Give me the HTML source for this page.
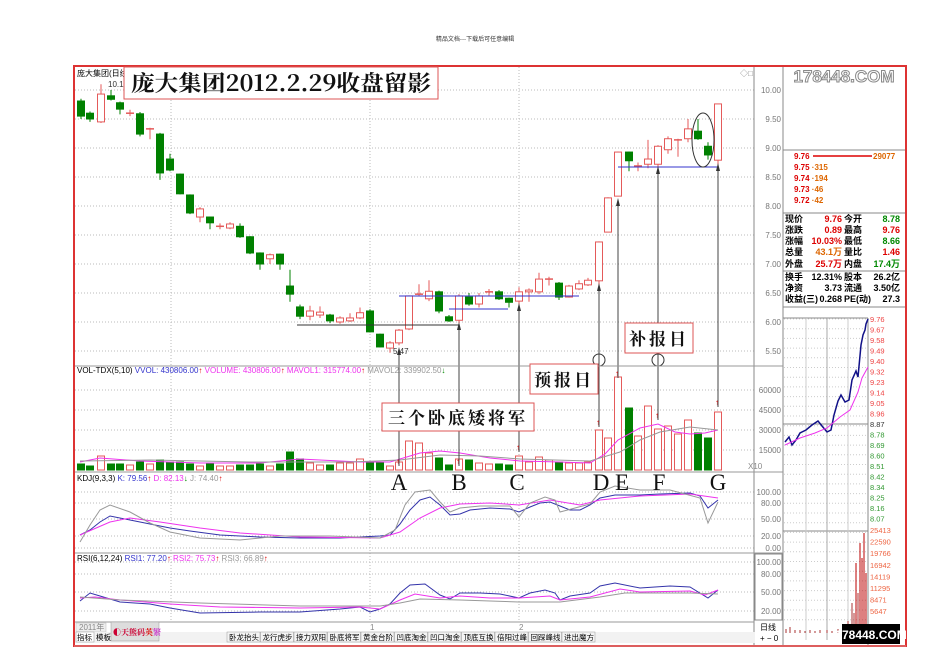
<!DOCTYPE html>
<html><head><meta charset="utf-8">
<style>
body{margin:0;background:#fff;width:950px;height:672px;overflow:hidden;font-family:"Liberation Sans","Noto Sans CJK SC",sans-serif;}
svg{position:absolute;left:0;top:0}
.t{font-family:"Liberation Sans","Noto Sans CJK SC",sans-serif;font-size:8px}
</style></head><body>
<svg id="s" width="950" height="672" xmlns="http://www.w3.org/2000/svg">
<text x="475" y="41" text-anchor="middle" style="font-family:'Noto Sans CJK SC',sans-serif;font-size:6px" fill="#333">精品文档---下载后可任意编辑</text>
<rect x="74" y="66" width="832" height="580" fill="none" stroke="#d33" stroke-width="2"/>
<line x1="74" y1="646" x2="906" y2="646" stroke="#d88" stroke-width="1"/>
<g id="grid"></g>
<g id="draw"></g>
<line x1="754" y1="67" x2="754" y2="645" stroke="#888"/>
<line x1="783" y1="67" x2="783" y2="645" stroke="#888"/>
<line x1="75" y1="366" x2="783" y2="366" stroke="#999"/>
<line x1="75" y1="472" x2="783" y2="472" stroke="#999"/>
<line x1="75" y1="553" x2="783" y2="553" stroke="#999"/>
<line x1="75" y1="622" x2="754" y2="622" stroke="#999"/>
<g class="t" fill="#777" text-anchor="end" id="axl"></g>
<text x="77" y="76" class="t" fill="#000">庞大集团(日线)</text>
<text x="108" y="87" class="t" fill="#333">10.1</text>
<text x="393" y="354" class="t" fill="#333" font-size="7">5.47</text>
<text x="77" y="373" class="t" font-size="7.5"><tspan fill="#000">VOL-TDX(5,10) </tspan><tspan fill="#33c">VVOL: 430806.00</tspan><tspan fill="#d00">↑</tspan><tspan fill="#e3e">  VOLUME: 430806.00</tspan><tspan fill="#d00">↑</tspan><tspan fill="#e3e">  MAVOL1: 315774.00</tspan><tspan fill="#d00">↑</tspan><tspan fill="#999">  MAVOL2: 339902.50</tspan><tspan fill="#080">↓</tspan></text>
<text x="77" y="481" class="t" font-size="7.5"><tspan fill="#000">KDJ(9,3,3) </tspan><tspan fill="#33c">K: 79.56</tspan><tspan fill="#d00">↑</tspan><tspan fill="#e3e">  D: 82.13</tspan><tspan fill="#080">↓</tspan><tspan fill="#999">  J: 74.40</tspan><tspan fill="#d00">↑</tspan></text>
<text x="77" y="561" class="t" font-size="7.5"><tspan fill="#000">RSI(6,12,24) </tspan><tspan fill="#33c">RSI1: 77.20</tspan><tspan fill="#d00">↑</tspan><tspan fill="#e3e">  RSI2: 75.73</tspan><tspan fill="#d00">↑</tspan><tspan fill="#999">  RSI3: 66.89</tspan><tspan fill="#d00">↑</tspan></text>
<text x="740" y="76" class="t" fill="#888">◇□</text>
<text x="748" y="469" class="t" fill="#888" font-size="7">X10</text>
<rect x="124" y="67" width="314" height="32" fill="#fff" stroke="#d55"/>
<text x="281" y="91" text-anchor="middle" textLength="300" lengthAdjust="spacingAndGlyphs" style="font-family:'Noto Serif CJK SC','Liberation Serif',serif;font-size:22px;font-weight:bold" fill="#111">庞大集团2012.2.29收盘留影</text>
<rect x="382" y="403" width="152" height="28" fill="#fff" stroke="#d55"/>
<text x="458" y="424" text-anchor="middle" style="font-family:'Noto Serif CJK SC',serif;font-size:17px;font-weight:bold;letter-spacing:3px" fill="#111">三个卧底矮将军</text>
<rect x="530" y="364" width="68" height="30" fill="#fff" stroke="#d55"/>
<text x="564" y="386" text-anchor="middle" style="font-family:'Noto Serif CJK SC',serif;font-size:17px;font-weight:bold;letter-spacing:3px" fill="#111">预报日</text>
<rect x="625" y="323" width="68" height="30" fill="#fff" stroke="#d55"/>
<text x="659" y="345" text-anchor="middle" style="font-family:'Noto Serif CJK SC',serif;font-size:17px;font-weight:bold;letter-spacing:3px" fill="#111">补报日</text>
<g style="font-family:'Liberation Serif',serif;font-size:23px" fill="#111" text-anchor="middle">
<text x="399" y="490">A</text><text x="459" y="490">B</text><text x="517" y="490">C</text><text x="601" y="490">D</text><text x="622" y="490">E</text><text x="659" y="490">F</text><text x="718" y="490">G</text></g>
<rect x="784" y="67" width="120" height="18" fill="#fff"/>
<text x="844" y="82" text-anchor="middle" style="font-family:'Liberation Sans',sans-serif;font-size:17px;font-weight:bold" fill="#fff" stroke="#888" stroke-width="1">178448.COM</text>
<line x1="783" y1="150" x2="905" y2="150" stroke="#888"/>
<g class="t" style="font-weight:bold;font-size:8px">
<text x="794" y="159" fill="#d00">9.76</text><line x1="813" y1="156" x2="872" y2="156" stroke="#d00" stroke-width="1.5"/><text x="873" y="159" fill="#d60">29077</text>
<text x="794" y="170" fill="#d00">9.75 <tspan fill="#d60">·315</tspan></text>
<text x="794" y="181" fill="#d00">9.74 <tspan fill="#d60">·194</tspan></text>
<text x="794" y="192" fill="#d00">9.73 <tspan fill="#d60">·46</tspan></text>
<text x="794" y="203" fill="#d00">9.72 <tspan fill="#d60">·42</tspan></text>
</g>
<line x1="783" y1="213" x2="905" y2="213" stroke="#888"/>
<line x1="783" y1="271" x2="905" y2="271" stroke="#888"/>
<line x1="783" y1="307" x2="905" y2="307" stroke="#888"/>
<g style="font-family:'Liberation Sans','Noto Sans CJK SC',sans-serif;font-size:9px;font-weight:bold">
<text x="785" y="222" fill="#000">现价</text><text x="842" y="222" fill="#d00" text-anchor="end">9.76</text><text x="844" y="222">今开</text><text x="900" y="222" fill="#080" text-anchor="end">8.78</text>
<text x="785" y="233">涨跌</text><text x="842" y="233" fill="#d00" text-anchor="end">0.89</text><text x="844" y="233">最高</text><text x="900" y="233" fill="#d00" text-anchor="end">9.76</text>
<text x="785" y="244">涨幅</text><text x="842" y="244" fill="#d00" text-anchor="end">10.03%</text><text x="844" y="244">最低</text><text x="900" y="244" fill="#080" text-anchor="end">8.66</text>
<text x="785" y="255">总量</text><text x="842" y="255" fill="#d60" text-anchor="end">43.1万</text><text x="844" y="255">量比</text><text x="900" y="255" fill="#d00" text-anchor="end">1.46</text>
<text x="785" y="267">外盘</text><text x="842" y="267" fill="#d00" text-anchor="end">25.7万</text><text x="844" y="267">内盘</text><text x="900" y="267" fill="#080" text-anchor="end">17.4万</text>
<text x="785" y="280">换手</text><text x="842" y="280" text-anchor="end">12.31%</text><text x="844" y="280">股本</text><text x="900" y="280" text-anchor="end">26.2亿</text>
<text x="785" y="291">净资</text><text x="842" y="291" text-anchor="end">3.73</text><text x="844" y="291">流通</text><text x="900" y="291" text-anchor="end">3.50亿</text>
<text x="785" y="302">收益(三)</text><text x="842" y="302" text-anchor="end">0.268</text><text x="844" y="302">PE(动)</text><text x="900" y="302" text-anchor="end">27.3</text>
</g>
<g id="mini"></g>
<rect x="76" y="623" width="30" height="9" fill="#eee" stroke="#bbb" stroke-width="0.5"/>
<text x="79" y="630" class="t" fill="#888" font-size="7">2011年</text>
<text x="370" y="630" class="t" fill="#888" font-size="7">1</text>
<text x="519" y="630" class="t" fill="#888" font-size="7">2</text>
<rect x="75" y="632" width="680" height="11" fill="#f2f2f2"/>
<g id="tabs" style="font-family:'Noto Sans CJK SC',sans-serif;font-size:7.5px"></g>
<rect x="111" y="622" width="48" height="19" fill="#ddd" stroke="#999" stroke-width="0.5"/>
<text x="113" y="635" style="font-family:'Noto Serif CJK SC',serif;font-size:8px;font-weight:bold" fill="#c03">◐天熊码<tspan fill="#d00">英</tspan><tspan fill="#c3c">繁</tspan></text>
<text x="760" y="630" class="t" fill="#000" font-size="7">日线</text>
<text x="760" y="641" class="t" fill="#000" font-size="7">+ − 0</text>
<rect x="842" y="624" width="58" height="20" fill="#000"/>
<text x="871" y="639" text-anchor="middle" style="font-family:'Liberation Sans',sans-serif;font-size:12px;font-weight:bold" fill="#fff">178448.COM</text>
</svg>
<script>
var NS="http://www.w3.org/2000/svg";
function el(p,t,a){var e=document.createElementNS(NS,t);for(var k in a)e.setAttribute(k,a[k]);p.appendChild(e);return e;}
var g=document.getElementById('draw'),gr=document.getElementById('grid'),ax=document.getElementById('axl');
function Y(p){return 90+(10-p)*58;}
for(var p=10;p>=5.5;p-=0.5){var y=Y(p);el(gr,'line',{x1:75,y1:y,x2:754,y2:y,stroke:'#bbb','stroke-dasharray':'1,2'});var t=el(ax,'text',{x:781,y:y+3});t.textContent=p.toFixed(2);}
[[60000,390],[45000,410],[30000,430],[15000,450]].forEach(function(v){el(gr,'line',{x1:75,y1:v[1],x2:754,y2:v[1],stroke:'#bbb','stroke-dasharray':'1,2'});var t=el(ax,'text',{x:781,y:v[1]+3});t.textContent=v[0];});
[[100,492],[80,503],[50,519],[20,536],[0,548]].forEach(function(v){el(gr,'line',{x1:75,y1:v[1],x2:754,y2:v[1],stroke:'#bbb','stroke-dasharray':'1,2'});var t=el(ax,'text',{x:781,y:v[1]+3});t.textContent=v[0].toFixed(2);});
[[100,562],[80,574],[50,592],[20,611]].forEach(function(v){el(gr,'line',{x1:75,y1:v[1],x2:754,y2:v[1],stroke:'#bbb','stroke-dasharray':'1,2'});var t=el(ax,'text',{x:781,y:v[1]+3});t.textContent=v[0].toFixed(2);});
[171,370,519].forEach(function(x){el(gr,'line',{x1:x,y1:67,x2:x,y2:622,stroke:'#bbb','stroke-dasharray':'1,2'});});
el(gr,'rect',{x:755,y:554,width:27,height:66,fill:'none',stroke:'#888'});
var C=[[81,9.81,9.55,9.85,9.5,6],[90,9.6,9.5,9.63,9.45,4],[101,9.45,9.93,10.1,9.43,14],[111,9.9,9.84,10.0,9.82,6],[120,9.78,9.67,9.8,9.58,6],[130,9.6,9.6,9.66,9.55,5],[140,9.59,9.24,9.62,9.2,8],[150,9.33,9.33,9.35,9.15,6],[160,9.24,8.57,9.26,8.45,10],[170,8.81,8.62,8.9,8.6,8],[180,8.55,8.21,8.56,8.2,8],[190,8.19,7.88,8.2,7.86,6],[200,7.81,7.95,7.98,7.72,4],[210,7.81,7.71,7.82,7.6,6],[220,7.65,7.65,7.7,7.6,4],[230,7.62,7.69,7.72,7.6,4],[240,7.65,7.47,7.7,7.45,5],[250,7.47,7.19,7.48,7.17,5],[260,7.19,7.0,7.2,6.9,6],[270,7.09,7.16,7.18,7.0,4],[280,7.17,7.0,7.18,6.9,6],[290,6.62,6.48,6.9,6.35,18],[300,6.26,6.1,6.3,6.05,11],[310,6.1,6.19,6.28,6.03,7],[320,6.12,6.17,6.27,6.07,5],[330,6.12,6.02,6.14,5.98,5],[340,6.0,6.07,6.1,5.97,7],[350,6.02,6.07,6.15,6.0,7],[360,6.07,6.16,6.25,6.05,11],[370,6.19,5.83,6.22,5.82,8],[380,5.79,5.57,5.8,5.56,8],[390,5.55,5.64,5.67,5.47,4],[399,5.64,5.86,5.88,5.6,8],[409,5.88,6.45,6.46,5.86,29],[419,6.48,6.48,6.65,6.45,27],[429,6.4,6.53,6.72,6.36,17],[439,6.52,6.19,6.54,6.15,12],[449,6.09,6.02,6.12,6.0,5],[459,6.03,6.45,6.48,5.98,11],[469,6.43,6.31,6.5,6.28,10],[479,6.31,6.45,6.5,6.25,7],[489,6.52,6.52,6.57,6.45,6],[499,6.52,6.4,6.55,6.38,6],[509,6.41,6.34,6.42,6.25,5],[519,6.36,6.52,6.6,6.3,14],[529,6.52,6.55,6.58,6.35,8],[539,6.52,6.74,6.85,6.48,13],[549,6.74,6.74,6.78,6.63,10],[559,6.67,6.43,6.69,6.38,8],[569,6.43,6.62,6.64,6.42,7],[579,6.57,6.66,6.72,6.55,7],[588,6.64,6.72,6.76,6.62,8],[599,6.71,7.38,7.39,6.62,40],[608,7.55,8.14,8.15,7.55,32],[618,8.17,8.93,8.94,8.17,93],[629,8.93,8.78,8.94,8.6,62],[638,8.69,8.69,8.75,8.6,34],[648,8.72,8.81,9.14,8.65,64],[658,8.72,9.03,9.05,8.62,41],[668,8.97,9.16,9.2,8.9,44],[678,9.14,9.14,9.16,8.85,36],[688,9.16,9.33,9.5,9.1,50],[698,9.29,9.16,9.5,9.14,37],[708,9.03,8.88,9.1,8.8,32],[718,8.79,9.76,9.76,8.66,58]];
var RED='#e45a5a',GRN='#008000';
C.forEach(function(c){var x=c[0],o=c[1],cl=c[2],up=cl>=o,col=up?RED:GRN;
var yt=Y(Math.max(o,cl)),yb=Y(Math.min(o,cl));
el(g,'line',{x1:x,y1:Y(c[3]),x2:x,y2:yt,stroke:col});el(g,'line',{x1:x,y1:yb,x2:x,y2:Y(c[4]),stroke:col});
if(Math.abs(o-cl)<0.02)el(g,'line',{x1:x-4,y1:yt,x2:x+4,y2:yt,stroke:col,'stroke-width':1.5});
else el(g,'rect',{x:x-3.5,y:yt,width:7,height:yb-yt,fill:up?'#fff':GRN,stroke:col});
var h=c[5];el(g,'rect',{x:x-3.5,y:470-h,width:7,height:h,fill:up?'#fff':GRN,stroke:col});
});
function pl(pts,col,w){el(g,'polyline',{points:pts.map(function(p){return p.join(',')}).join(' '),fill:'none',stroke:col,'stroke-width':w||1});}
pl([[80,462],[100,458],[140,461],[200,463],[260,463],[300,459],[360,462],[390,462],[420,453],[440,451],[460,453],[490,458],[520,461],[560,462],[590,463],[605,454],[618,440],[640,428],[658,424],[675,432],[690,434],[705,433],[718,430]],'#e3e');
pl([[80,461],[150,460],[250,462],[350,462],[400,460],[440,455],[480,456],[520,459],[590,461],[620,452],[640,440],[660,432],[690,427],[718,430]],'#999');
pl([[80,535],[90,530],[100,522],[110,516],[130,520],[150,524],[170,528],[190,531],[220,535],[260,537],[300,538],[340,538],[380,536],[390,535],[400,524],[410,510],[420,500],[430,497],[440,505],[450,515],[460,514],[470,510],[490,508],[510,509],[519,512],[530,507],[540,503],[550,502],[560,506],[570,510],[580,510],[590,505],[600,498],[615,495],[640,495],[660,494],[690,493],[700,496],[708,508],[718,500]],'#33a');
pl([[80,535],[110,522],[130,518],[160,522],[200,528],[240,533],[300,537],[380,538],[400,532],[420,518],[440,508],[460,504],[490,503],[519,505],[550,500],[580,505],[600,500],[640,496],[690,494],[718,498]],'#e3e');
pl([[80,542],[90,525],[100,510],[110,505],[130,512],[150,523],[170,532],[200,538],[240,540],[280,536],[330,536],[380,538],[395,530],[405,505],[415,492],[430,490],[440,502],[450,512],[460,508],[480,506],[510,506],[519,517],[530,503],[545,497],[555,500],[560,512],[575,508],[590,504],[600,492],[615,486],[640,490],[670,490],[700,498],[708,523],[718,502]],'#999');
pl([[80,601],[90,593],[100,596],[120,602],[150,604],[170,608],[200,613],[260,612],[300,612],[340,609],[360,607],[370,612],[380,609],[390,604],[400,593],[410,585],[425,584],[440,595],[450,599],[460,593],[480,593],[500,594],[519,598],[530,593],[545,590],[555,593],[560,600],[570,596],[590,593],[600,586],[615,583],[640,588],[670,586],[690,587],[708,598],[718,590]],'#33a');
pl([[80,598],[95,597],[120,600],[170,604],[220,607],[300,608],[360,607],[380,609],[400,600],[415,594],[440,598],[460,596],[490,598],[519,598],[550,596],[560,600],[590,597],[620,589],[640,592],[690,591],[705,595],[718,590]],'#e3e');
pl([[80,597],[120,600],[200,603],[300,606],[380,606],[400,603],[420,599],[460,600],[519,602],[560,602],[600,597],[625,593],[690,593],[718,594]],'#999');
el(g,'line',{x1:297,y1:325,x2:459,y2:325,stroke:'#333'});
el(g,'line',{x1:399,y1:296,x2:579,y2:296,stroke:'#33c'});
el(g,'line',{x1:449,y1:309,x2:508,y2:309,stroke:'#33c'});
el(g,'line',{x1:618,y1:167,x2:718,y2:167,stroke:'#33c'});
el(g,'ellipse',{cx:703,cy:140,rx:11,ry:27,fill:'none',stroke:'#333'});
el(g,'circle',{cx:599,cy:360,r:6,fill:'none',stroke:'#333'});el(g,'circle',{cx:658,cy:360,r:6,fill:'none',stroke:'#333'});
[[399,466,347],[459,466,322],[519,452,303],[599,427,283],[618,378,198],[658,420,166],[718,407,163]].forEach(function(a){
el(g,'line',{x1:a[0],y1:a[1],x2:a[0],y2:a[2]+2,stroke:'#444'});el(g,'polygon',{points:(a[0]-2)+','+(a[2]+8)+' '+a[0]+','+a[2]+' '+(a[0]+2)+','+(a[2]+8),fill:'#333'});
el(g,'text',{x:a[0]-3,y:a[1]-2,fill:'#d00','font-size':8}).textContent='↑';});
var m=document.getElementById('mini');
el(m,'line',{x1:783,y1:318,x2:868,y2:318,stroke:'#888'});el(m,'line',{x1:783,y1:424,x2:868,y2:424,stroke:'#888'});el(m,'line',{x1:783,y1:531,x2:868,y2:531,stroke:'#888'});
for(var i=0;i<32;i++){var yy=319+i*9.7;if(yy<622)el(m,'line',{x1:784,y1:yy,x2:868,y2:yy,stroke:'#ccc','stroke-dasharray':'1,2'});}
[806,827,848].forEach(function(x){el(m,'line',{x1:x,y1:318,x2:x,y2:640,stroke:x==827?'#aaa':'#ccc'});});
el(m,'line',{x1:868,y1:318,x2:868,y2:645,stroke:'#888'});
var pl2=['9.76','9.67','9.58','9.49','9.40','9.32','9.23','9.14','9.05','8.96','8.87','8.78','8.69','8.60','8.51','8.42','8.34','8.25','8.16','8.07'];
pl2.forEach(function(s,i){var t=el(m,'text',{x:870,y:322+i*10.5,'font-size':7.5,fill:i<10?'#e44':(i==10?'#333':'#393'),'font-family':'Liberation Sans'});t.textContent=s;});
['25413','22590','19766','16942','14119','11295','8471','5647'].forEach(function(s,i){var t=el(m,'text',{x:870,y:533+i*11.6,'font-size':7.5,fill:'#e64','font-family':'Liberation Sans'});t.textContent=s;});
el(m,'polyline',{points:'785,442 789,437 792,445 796,440 800,433 806,430 812,425 818,421 822,426 827,432 831,430 834,415 838,401 841,395 845,402 849,400 852,380 856,371 858,377 861,345 863,335 865,330 866,324 868,319',fill:'none',stroke:'#118','stroke-width':1.5});
el(m,'polyline',{points:'785,445 800,438 815,433 827,428 840,417 850,410 858,392 862,378 868,367',fill:'none',stroke:'#e3e'});
[[786,4],[790,6],[795,3],[800,3],[805,2],[810,3],[815,2],[820,3],[827,3],[832,2],[838,4],[844,3],[848,12],[850,8],[852,30],[854,20],[856,70],[858,40],[860,90],[862,75],[864,100],[866,60]].forEach(function(b){el(m,'line',{x1:b[0],y1:633,x2:b[0],y2:633-b[1],stroke:b[1]>50?'#b00':'#a33'});});
var tb=document.getElementById('tabs');
el(tb,'rect',{x:76,y:632,width:18,height:10,fill:'#fff',stroke:'#999','stroke-width':0.5});el(tb,'text',{x:77,y:640}).textContent='指标';
el(tb,'text',{x:96,y:640}).textContent='模板';
['卧龙抬头','龙行虎步','接力双阳','卧底将军','黄金台阶','凹底淘金','凹口淘金','顶底互换','倍阳过峰','回踩峰线','进出魔方'].forEach(function(s,i){var x=227+i*33.5;el(tb,'rect',{x:x,y:632,width:33,height:10,fill:'#f4f4f4',stroke:'#999','stroke-width':0.5});el(tb,'text',{x:x+2,y:640,fill:'#000'}).textContent=s;});
</script>
</body></html>
